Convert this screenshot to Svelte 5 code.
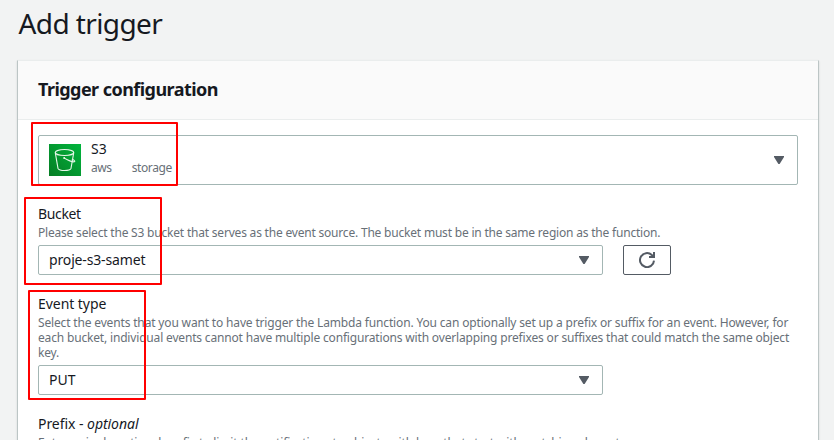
<script>
  const marks = [
    { left: 31, top: 122, width: 147, height: 64 },
    { left: 24, top: 197, width: 138, height: 88 },
    { left: 28, top: 290, width: 118, height: 110 }
  ];
</script>

{#snippet caret()}
  <svg class="caret" width="10" height="8" viewBox="0 0 10 8"><path d="M0 0H10V1L5.6 8H4.4L0 1Z" fill="#545b64" /></svg>
{/snippet}

<main>
  <h1>Add trigger</h1>
  <section class="card">
    <header><h2>Trigger configuration</h2></header>
    <div class="body">
      <div class="select source">
        <svg class="logo" width="32" height="32" viewBox="0 0 32 32">
          <defs>
            <linearGradient id="green" x1="0" y1="1" x2="1" y2="0">
              <stop offset="0" stop-color="#067d24" />
              <stop offset="1" stop-color="#00b53d" />
            </linearGradient>
          </defs>
          <rect width="32" height="32" fill="url(#green)" />
          <g fill="none" stroke="#e5f7e8" stroke-width="1.1" stroke-linecap="round">
            <ellipse cx="15.5" cy="8.5" rx="9.2" ry="3" />
            <path d="M6.3 8.8L9 24.4C10.5 27.1 20.7 27.1 22 24.4L24.7 8.8" />
            <path d="M15.3 14.1C19 16.3 24.5 18.5 25.7 17.6C26.2 17 24.5 15.8 23.3 15.3" />
          </g>
          <circle cx="15.2" cy="14" r="1" fill="#e5f7e8" />
        </svg>
        <div class="service">
          <span class="name">S3</span>
          <div class="tags"><span>aws</span><span>storage</span></div>
        </div>
        {@render caret()}
      </div>

      <div class="field">
        <div class="label bucket">Bucket</div>
        <div class="hint">Please select the S3 bucket that serves as the event source. The bucket must be in the same region as the function.</div>
        <div class="row">
          <div class="select short"><span class="value">proje-s3-samet</span>{@render caret()}</div>
          <button aria-label="Refresh">
            <svg width="16" height="16" viewBox="0 0 16 16" fill="none" stroke="#545b64" stroke-width="2">
              <path d="M15 8.6A7 7 0 1 1 12.8 3L15 5.1" />
              <path d="M15 0V5H10" />
            </svg>
          </button>
        </div>
      </div>

      <div class="field">
        <div class="label">Event type</div>
        <div class="hint events">
          <div>Select the events that you want to have trigger the Lambda function. You can optionally set up a prefix or suffix for an event. However, for</div>
          <div class="second">each bucket, individual events cannot have multiple configurations with overlapping prefixes or suffixes that could match the same object</div>
          <div>key.</div>
        </div>
        <div class="select short"><span>PUT</span>{@render caret()}</div>
      </div>

      <div class="field">
        <div class="label prefix">Prefix - <i>optional</i></div>
        <div class="hint last">Enter a single optional prefix to limit the notifications to objects with keys that start with matching characters.</div>
      </div>
    </div>
  </section>
  {#each marks as m}
    <div class="mark" style="left:{m.left}px;top:{m.top}px;width:{m.width}px;height:{m.height}px"></div>
  {/each}
</main>

<style>
  :global(body) { background: #f2f3f3; }
  * { box-sizing: border-box; }
  main {
    position: relative;
    width: 834px;
    height: 440px;
    overflow: hidden;
    padding: 0 15px 0 17px;
    background: #f2f3f3;
    color: #16191f;
    font: 14px/22px "Noto Sans", sans-serif;
  }
  h1 { margin: 0; height: 60px; padding: 5px 0 0 1.5px; font-size: 28px; line-height: 36px; font-weight: 400; letter-spacing: -0.6px; }
  .card { height: 420px; background: #fff; border: 1px solid #bcc5c5; border-top-color: #eaeded; box-shadow: 0 1px 2px #001c2420; }
  header { height: 59px; padding: 17px 20px; background: #fafafa; border-bottom: 1px solid #eaeded; }
  h2 { margin: 0; font-size: 18px; line-height: 22px; font-weight: 700; letter-spacing: -0.55px; }
  .body { padding: 15px 20px 0; }
  .select { display: flex; align-items: center; height: 30px; padding: 0 13px 0 10px; border: 1px solid #a3b6b4; border-radius: 2px; background: #fff; white-space: nowrap; }
  .source { height: 50px; }
  .short { width: 565px; }
  .value { letter-spacing: -0.15px; }
  .caret { margin-left: auto; flex: none; }
  .logo { flex: none; }
  .service { margin-left: 10px; height: 44px; }
  .name { display: block; line-height: 22px; }
  .tags { display: flex; gap: 20px; color: #687078; font-size: 12px; line-height: 16px; letter-spacing: -0.4px; }
  .field { margin-top: 18px; white-space: nowrap; }
  .label { height: 22px; letter-spacing: -0.05px; }
  .bucket { letter-spacing: -0.35px; }
  .prefix { letter-spacing: -0.05px; }
  .hint { margin-bottom: 5px; color: #687078; font-size: 12px; line-height: 15px; letter-spacing: -0.2px; }
  .events { letter-spacing: -0.16px; }
  .second { letter-spacing: -0.17px; }
  .last { letter-spacing: -0.13px; }
  .row { display: flex; gap: 20px; }
  button { display: flex; align-items: center; justify-content: center; width: 48px; height: 30px; padding: 0; border: 1px solid #545b64; border-radius: 2px; background: #fff; }
  .mark { position: absolute; border: 2px solid #f00; border-radius: 1px; }
</style>
